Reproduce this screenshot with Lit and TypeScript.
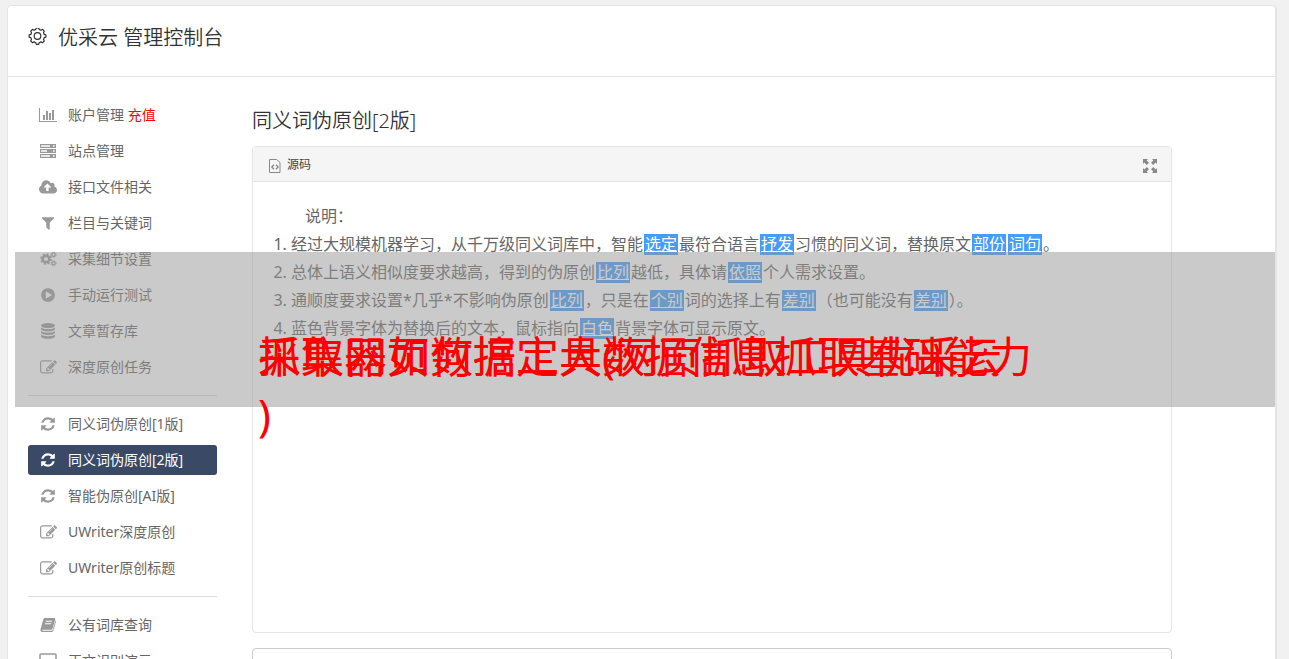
import { LitElement, html, css, TemplateResult } from "lit";
import { customElement, state } from "lit/decorators.js";
import { classMap } from "lit/directives/class-map.js";

const icons: Record<string, TemplateResult> = {
  gear: html`<svg viewBox="0 1 20 20" width="20" height="20" fill="none" stroke="currentColor" stroke-width="1.2" stroke-linejoin="round"><circle cx="9.500" cy="9" r="3.300"/><path d="M7.800 2.400 8.300.8h2.400l.5 1.600 1.800.8 1.600-.8 1.700 1.700-.8 1.600.7 1.700 1.700.5v2.300l-1.700.5-.7 1.700.8 1.600-1.700 1.700-1.600-.8-1.800.8-.5 1.600H8.300l-.5-1.600-1.800-.8-1.600.8L2.700 14l.8-1.600-.7-1.700-1.700-.5V7.900l1.700-.5.7-1.700-.8-1.600 1.700-1.700 1.600.8z"/></svg>`,
  chart: html`<svg viewBox="0 0 18 16" width="18" height="16" fill="currentColor"><path d="M0 1h1v13h17v1H0zM4 8h2v5H4zM7 4h2v9H7zM10 6h2v7h-2zM13 3h2v10h-2z"/></svg>`,
  server: html`<svg viewBox="0 0 16 14" width="16" height="14" fill="currentColor"><path fill-rule="evenodd" d="M0 0h16v4H0zM1 1.300v1.400h9V1.300zM13 1.300v1.400h1.600V1.300zM0 5h16v4H0zM1 6.300v1.400h6V6.300zM13 6.300v1.400h1.600V6.300zM0 10h16v4H0zM1 11.300v1.400h9v-1.400zM13 11.300v1.400h1.600v-1.400z"/></svg>`,
  upload: html`<svg viewBox="-64 0 1920 1792" width="18" height="17" fill="currentColor"><path d="M1216 864q0-14-9-23l-352-352q-9-9-23-9t-23 9l-351 351q-10 12-10 24 0 14 9 23t23 9h224v352q0 13 9.5 22.5t22.5 9.5h192q13 0 22.5-9.5t9.500-22.5v-352h224q13 0 22.500-9.5t9.5-22.500zm640 288q0 159-112.5 271.5t-271.5 112.5h-1088q-185 0-316.5-131.5t-131.5-316.5q0-130 70-240t188-165q-2-30-2-43 0-212 150-362t362-150q156 0 285.5 87t188.5 231q71-62 166-62 106 0 181 75t75 181q0 76-41 138 130 31 213.5 135.5t83.500 238.5z"/></svg>`,
  filter: html`<svg viewBox="0 0 1792 1792" width="16" height="16" fill="currentColor"><path d="M1595 295q17 41-14 70l-493 493v742q0 42-39 59-13 5-25 5-27 0-45-19l-256-256q-19-19-19-45v-486l-493-493q-31-29-14-70 17-39 59-39h1280q42 0 59 39z"/></svg>`,
  cogs: html`<svg viewBox="0 0 17 16" width="17" height="16" fill="none" stroke="currentColor"><circle cx="6" cy="8" r="3.300" stroke-width="2.500"/><circle cx="6" cy="8" r="5" stroke-width="1.600" stroke-dasharray="2 1.927"/><circle cx="13.500" cy="3.700" r="1.700" stroke-width="1.200"/><circle cx="13.500" cy="3.700" r="2.600" stroke-width="1" stroke-dasharray="1.100 .942"/><circle cx="13.500" cy="12.300" r="1.700" stroke-width="1.200"/><circle cx="13.500" cy="12.300" r="2.600" stroke-width="1" stroke-dasharray="1.100 .942"/></svg>`,
  play: html`<svg viewBox="0 0 1792 1792" width="16" height="16" fill="currentColor"><path d="M896 128q209 0 385.5 103t279.5 279.5 103 385.5-103 385.5-279.5 279.5-385.5 103-385.5-103-279.5-279.5-103-385.5 103-385.5 279.5-279.5 385.5-103zm384 823q32-18 32-55t-32-55l-544-320q-31-19-64-1-32 19-32 56v640q0 37 32 56 16 8 32 8 17 0 32-9z"/></svg>`,
  database: html`<svg viewBox="0 0 14 16" width="14" height="16" fill="currentColor"><ellipse cx="7" cy="2.600" rx="7" ry="2.600"/><path d="M0 4.400c2 2.300 12 2.300 14 0v1.800c-1 3-13 3-14 0zM0 8c2 2.300 12 2.300 14 0v1.800c-1 3-13 3-14 0zM0 11.600c2 2.300 12 2.300 14 0v1.800c-1 3.200-13 3.200-14 0z"/></svg>`,
  edit: html`<svg viewBox="0 0 1792 1792" width="17" height="17" fill="currentColor"><path d="M888 1184l116-116-152-152-116 116v56h96v96h56zm440-720q-16-16-33 1l-350 350q-17 17-1 33t33-1l350-350q17-17 1-33zm80 594v190q0 119-84.5 203.5t-203.5 84.5h-832q-119 0-203.5-84.5t-84.500-203.5v-832q0-119 84.500-203.5t203.5-84.5h832q63 0 117 25 15 7 18 23 3 17-9 29l-49 49q-14 14-32 8-23-6-45-6h-832q-66 0-113 47t-47 113v832q0 66 47 113t113 47h832q66 0 113-47t47-113v-126q0-13 9-22l64-64q15-15 35-7t20 29zm-96-738l288 288-672 672h-288v-288zm444 132l-92 92-288-288 92-92q28-28 68-28t68 28l152 152q28 28 28 68t-28 68z"/></svg>`,
  refresh: html`<svg viewBox="0 0 1792 1792" width="16" height="16" fill="currentColor"><path d="M1639 1056q0 5-1 7-64 268-268 434.5t-478 166.5q-146 0-282.5-55t-243.5-157l-129 129q-19 19-45 19t-45-19-19-45v-448q0-26 19-45t45-19h448q26 0 45 19t19 45-19 45l-137 137q71 66 161 102t187 36q134 0 250-65t186-179q11-17 53-117 8-23 30-23h192q13 0 22.5 9.5t9.5 22.5zm25-800v448q0 26-19 45t-45 19h-448q-26 0-45-19t-19-45 19-45l138-138q-148-137-349-137-134 0-250 65t-186 179q-11 17-53 117-8 23-30 23h-199q-13 0-22.5-9.5t-9.5-22.5v-7q65-268 270-434.5t480-166.5q146 0 284 55.5t245 156.5l130-129q19-19 45-19t45 19 19 45z"/></svg>`,
  book: html`<svg viewBox="0 0 16 16" width="16" height="16"><path fill="currentColor" fill-rule="evenodd" d="M5 1h9.200c.9 0 1.200.7 1 1.400l-2.700 9c-.3.900-.8 1.300-1.700 1.300H2.600c-.8 0-.6 1.100.4 1.100h8.600c.5 0 .8-.3 1-.8l2.900-9.500c.5.3.6.7.4 1.300l-2.700 9c-.3.800-.9 1.300-1.800 1.300H2.600C1.200 15.100 0 13.700.5 12.300L3.300 2.600C3.600 1.600 4.100 1 5 1zm.9 2.800-.3 1h6.200l.3-1zm-.7 2.400-.3 1h6.200l.3-1z"/></svg>`,
  laptop: html`<svg viewBox="0 0 18 16" width="18" height="16" fill="none" stroke="currentColor" stroke-width="1.500"><rect x="1" y="1" width="16" height="11" rx="1"/><path d="M6 15h6"/></svg>`,
  source: html`<svg viewBox="0 0 12 14" width="12" height="14" fill="none" stroke="currentColor"><path d="M.5.500h7.200l3.300 3v10H.5z"/><path stroke-width="1.300" d="M4.900 5.800 2.800 8l2.100 2.200M7 5.800 9.100 8 7 10.200"/></svg>`,
  expand: html`<svg viewBox="0 0 14 14" width="14" height="14" fill="currentColor"><path d="M0 0h5L3.600 1.400 6 3.800 3.800 6 1.400 3.600 0 5zM14 0v5l-1.400-1.400L10.200 6 8 3.800l2.400-2.400L9 0zM0 14V9l1.400 1.400L3.800 8 6 10.200l-2.400 2.400L5 14zM14 14H9l1.400-1.400L8 10.200 10.200 8l2.400 2.400L14 9z"/></svg>`,
};

interface Entry { icon: string; label: string; extra?: string }

const groups: Entry[][] = [
  [
    { icon: "chart", label: "账户管理", extra: "充值" },
    { icon: "server", label: "站点管理" },
    { icon: "upload", label: "接口文件相关" },
    { icon: "filter", label: "栏目与关键词" },
    { icon: "cogs", label: "采集细节设置" },
    { icon: "play", label: "手动运行测试" },
    { icon: "database", label: "文章暂存库" },
    { icon: "edit", label: "深度原创任务" },
  ],
  [
    { icon: "refresh", label: "同义词伪原创[1版]" },
    { icon: "refresh", label: "同义词伪原创[2版]" },
    { icon: "refresh", label: "智能伪原创[AI版]" },
    { icon: "edit", label: "UWriter深度原创" },
    { icon: "edit", label: "UWriter原创标题" },
  ],
  [
    { icon: "book", label: "公有词库查询" },
    { icon: "laptop", label: "正文识别演示" },
  ],
];

// Words between braces are the replaced synonyms.
const notes = [
  "经过大规模机器学习，从千万级同义词库中，智能{选定}最符合语言{抒发}习惯的同义词，替换原文{部份}{词句}。",
  "总体上语义相似度要求越高，得到的伪原创{比列}越低，具体请{依照}个人需求设置。",
  "通顺度要求设置*几乎*不影响伪原创{比列}，只是在{个别}词的选择上有{差别}（也可能没有{差别}）。",
  "蓝色背景字体为替换后的文本，鼠标指向{白色}背景字体可显示原文。",
];

@customElement("side-menu")
class SideMenu extends LitElement {
  @state() current = "同义词伪原创[2版]";

  static styles = css`
    :host { display: block; }
    .group { list-style: none; margin: 0; padding: 0; display: flex; flex-direction: column; gap: 6px; }
    .group + .group { margin-top: 13px; padding-top: 13px; border-top: 1px solid #ddd; }
    .item {
      display: flex; align-items: center; height: 30px; padding: 0 10px 0 8px; gap: 8px;
      border-radius: 3px; color: #666; text-decoration: none; font-size: 14px; line-height: 30px;
      white-space: nowrap;
    }
    .icon { display: flex; justify-content: center; width: 24px; color: #999; }
    .extra { color: #f00; }
    .active, .active .icon { color: #fff; }
    .active { background: #3a4a66; }
  `;

  render() {
    return html`<nav>
      ${groups.map((g) => html`<ul class="group">
        ${g.map((e) => html`<li>
          <a href="#" class=${classMap({ item: true, active: e.label === this.current })}
            @click=${(ev: Event) => { ev.preventDefault(); this.current = e.label; }}>
            <span class="icon">${icons[e.icon]}</span>
            <span>${e.label}${e.extra ? html` <span class="extra">${e.extra}</span>` : ""}</span>
          </a></li>`)}
      </ul>`)}
    </nav>`;
  }
}

@customElement("text-editor")
class TextEditor extends LitElement {
  static styles = css`
    :host { display: block; border: 1px solid #e5e5e5; border-radius: 4px; background: #fff; }
    .bar {
      display: flex; justify-content: space-between; align-items: center; box-sizing: border-box; height: 35px;
      padding: 2px 14px 0 16px; background: #f5f5f5; border-bottom: 1px solid #e5e5e5;
      border-radius: 3px 3px 0 0;
    }
    .tool {
      display: flex; align-items: center; gap: 6px; padding: 0; border: 0; background: none;
      font: inherit; font-size: 12px; line-height: 20px; color: #444;
    }
    .tool svg { display: block; margin-top: 2px; color: #888; }
    .body { min-height: 410px; padding: 20px; color: #666; font-size: 16px; line-height: 28px; }
    .lead { margin: 0; text-indent: 32px; }
    .notes { margin: 0; padding-left: 18px; }
    .swap {
      display: inline-block; margin: 0 1px; padding: 0 1px; line-height: 21px;
      color: #fff; background: #469cf6; text-decoration: underline;
    }
  `;

  render() {
    return html`
      <div class="bar">
        <button class="tool" type="button">${icons.source}<span>源码</span></button>
        <button class="tool" type="button" aria-label="全屏">${icons.expand}</button>
      </div>
      <div class="body">
        <p class="lead">说明：</p>
        <ol class="notes">
          ${notes.map((n) => html`<li>${n.split(/[{}]/).map((part, i) =>
            i % 2 ? html`<span class="swap">${part}</span>` : part)}</li>`)}
        </ol>
      </div>`;
  }
}

@customElement("title-banner")
class TitleBanner extends LitElement {
  static styles = css`
    :host {
      position: absolute; top: 252px; left: 15px; right: 14px; height: 155px;
      background: rgba(150, 150, 150, 0.5); color: #f00; pointer-events: none;
    }
    .stack { display: grid; width: 774px; margin: 0 auto; padding-top: 76px; }
    .line { grid-area: 1 / 1; margin: 0; font-size: 43px; line-height: 58px; }
  `;

  render() {
    return html`<div class="stack">
      <p class="line">采集器如何搞定大数据信息抓取基础能力</p>
      <p class="line">抓取网页数据工具(网页抓取工具优采云<br>)</p>
    </div>`;
  }
}

@customElement("app-root")
class AppRoot extends LitElement {
  static styles = css`
    :host {
      display: block; position: relative; box-sizing: border-box; height: 100vh; overflow: hidden;
      padding: 5px 13px 0 7px; background: #f1f1f1;
      font-family: "Noto Sans", "Noto Sans CJK SC", sans-serif; font-weight: 400;
    }
    .card { background: #fff; border: 1px solid #e5e5e5; border-radius: 4px 4px 0 0; box-shadow: 1px 0 0 #e5e5e5; }
    .top { display: flex; align-items: center; gap: 10px; padding: 12px 20px 18px; border-bottom: 1px solid #e5e5e5; color: #333; }
    .brand, .heading { margin: 0; font-size: 20px; font-weight: 350; line-height: 40px; color: #333; }
    .top svg { display: block; }
    .page { display: grid; grid-template-columns: 189px minmax(0, 1fr); gap: 35px; padding: 23px 103px 0 20px; }
    .main { display: flex; flex-direction: column; }
    .heading { padding: 1px 0 5px; }
    .result { box-sizing: border-box; width: 100%; height: 200px; margin-top: 15px; border: 1px solid #ccc; border-radius: 4px; resize: none; }
  `;

  render() {
    return html`
      <div class="card">
        <header class="top">${icons.gear}<h1 class="brand">优采云 管理控制台</h1></header>
        <div class="page">
          <side-menu></side-menu>
          <main class="main">
            <h2 class="heading">同义词伪原创[2版]</h2>
            <text-editor></text-editor>
            <textarea class="result" aria-label="结果"></textarea>
          </main>
        </div>
      </div>
      <title-banner></title-banner>`;
  }
}
